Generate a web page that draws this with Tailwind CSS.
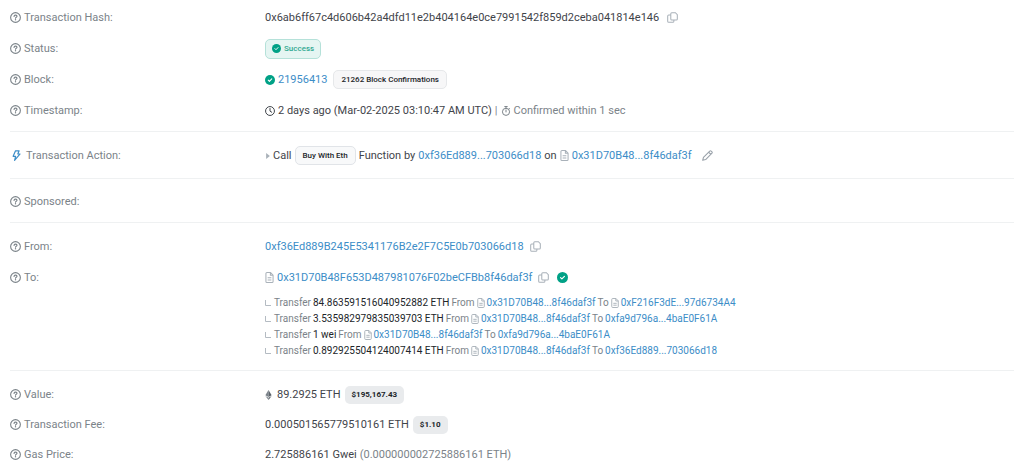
<!DOCTYPE html>
<html lang="en">
<head>
    <meta charset="UTF-8">
    <meta name="viewport" content="width=device-width, initial-scale=1.0">
    <title>Transaction Details</title>
    <script src="https://cdn.jsdelivr.net/npm/@tailwindcss/browser@4"></script>
</head>
<body class="bg-white font-['Roboto',sans-serif] text-[11px] leading-4 text-[#3f444a]">
    <!-- Icon set -->
    <svg class="hidden" aria-hidden="true">
        <symbol id="help" viewBox="0 0 16 16">
            <circle cx="8" cy="8" r="7.1" fill="none" stroke="currentColor" stroke-width="1.6"/>
            <path d="M5.9 6.400c0-1 .8-1.800 1.900-1.800h.5c1 0 1.900.7 1.900 1.700 0 1.400-2.200 1.500-2.200 2.800" fill="none" stroke="currentColor" stroke-width="1.600" stroke-linecap="round"/>
            <circle cx="8" cy="11.300" r="1" fill="currentColor"/>
        </symbol>
        <symbol id="check" viewBox="0 0 16 16">
            <circle cx="8" cy="8" r="8" fill="currentColor"/>
            <path d="M5.200 8.200l1.900 1.900 3.700-3.800" fill="none" stroke="#fff" stroke-width="1.700" stroke-linecap="round" stroke-linejoin="round"/>
        </symbol>
        <symbol id="copy" viewBox="0 0 16 16">
            <path d="M7 1h5.200L15 3.800V10a1.500 1.500 0 0 1-1.500 1.500H7A1.500 1.500 0 0 1 5.500 10V2.500A1.500 1.500 0 0 1 7 1z" fill="none" stroke="currentColor" stroke-width="1.500"/>
            <path d="M5.500 4.500h-3A1.500 1.500 0 0 0 1 6v7.500A1.500 1.500 0 0 0 2.500 15h6a1.500 1.500 0 0 0 1.500-1.500v-2" fill="none" stroke="currentColor" stroke-width="1.500"/>
        </symbol>
        <symbol id="clock" viewBox="0 0 16 16">
            <circle cx="8" cy="8" r="7.100" fill="none" stroke="currentColor" stroke-width="1.600"/>
            <path d="M8 4v4.200l2.800 1.800" fill="none" stroke="currentColor" stroke-width="1.600" stroke-linecap="round"/>
        </symbol>
        <symbol id="stopwatch" viewBox="0 0 16 16">
            <circle cx="8" cy="9.300" r="5.700" fill="none" stroke="currentColor" stroke-width="1.600"/>
            <path d="M6 .9h4M8 1v2.500M8 6.300v3.200M12.200 5.200l1.300-1.300" fill="none" stroke="currentColor" stroke-width="1.600" stroke-linecap="round"/>
        </symbol>
        <symbol id="doc" viewBox="0 0 12 16">
            <path d="M2.300.8h5.200l3.700 3.700v9.200a1.500 1.500 0 0 1-1.500 1.500H2.300A1.500 1.500 0 0 1 .8 13.700V2.300A1.500 1.500 0 0 1 2.300.8zM7.300.8v4h3.900M3.300 8.500h5.400M3.300 11.500h5.400" fill="none" stroke="currentColor" stroke-width="1.500"/>
        </symbol>
        <symbol id="bolt" viewBox="0 0 12 16">
            <path d="M4.600 1.200h5.200L7.900 5.800h3.300L3.200 15l1.500-5.800H1.100z" fill="none" stroke="currentColor" stroke-width="1.700" stroke-linejoin="round"/>
        </symbol>
        <symbol id="pencil" viewBox="0 0 16 16">
            <path d="M1 15l1.100-4.300L11.300 1.500a1.400 1.400 0 0 1 2 0l1.200 1.200a1.400 1.400 0 0 1 0 2L5.300 13.900zM9.600 3.200l3.200 3.200" fill="none" stroke="currentColor" stroke-width="1.600" stroke-linejoin="round"/>
        </symbol>
        <symbol id="caret" viewBox="0 0 5 8">
            <path d="M0 0l5 4-5 4z" fill="currentColor"/>
        </symbol>
        <symbol id="branch" viewBox="0 0 6 6">
            <path d="M.5 0v5.500H6" fill="none" stroke="currentColor"/>
        </symbol>
        <symbol id="eth" viewBox="0 0 10 16">
            <path d="M5 0L0 8.200l5 2.900z" fill="#7c848b"/>
            <path d="M5 0l5 8.200-5 2.900z" fill="#5b636a"/>
            <path d="M0 9.400L5 16v-3.700z" fill="#7c848b"/>
            <path d="M10 9.400L5 16v-3.700z" fill="#5b636a"/>
        </symbol>
    </svg>

    <main class="px-[10px]">
        <!-- Overview -->
        <dl class="flex flex-col gap-2 border-b border-[#eff1f2] pt-[6px] pb-[9px]">
            <div class="grid grid-cols-[255px_1fr] items-center">
                <dt class="flex items-center gap-[3px] text-[#7b8389]"><svg class="size-[11px]"><use href="#help"/></svg>Transaction Hash:</dt>
                <dd class="flex h-[23px] items-center gap-2">0x6ab6ff67c4d606b42a4dfd11e2b404164e0ce7991542f859d2ceba041814e146
                    <button aria-label="Copy hash" class="text-[#a9b1b9]"><svg class="size-[11px]"><use href="#copy"/></svg></button>
                </dd>
            </div>
            <div class="grid grid-cols-[255px_1fr] items-center">
                <dt class="flex items-center gap-[3px] text-[#7b8389]"><svg class="size-[11px]"><use href="#help"/></svg>Status:</dt>
                <dd class="flex h-[23px] items-center">
                    <span class="flex h-5 items-center gap-[3px] rounded-[5px] border border-[#b5e1d9] bg-[#e5f5f2] px-[6px] text-[8px] font-medium text-[#2fa891]"><svg class="size-[9px] text-[#00a186]"><use href="#check"/></svg>Success</span>
                </dd>
            </div>
            <div class="grid grid-cols-[255px_1fr] items-center">
                <dt class="flex items-center gap-[3px] text-[#7b8389]"><svg class="size-[11px]"><use href="#help"/></svg>Block:</dt>
                <dd class="flex h-[23px] items-center gap-[3px]">
                    <svg class="size-[10px] text-[#00a186]"><use href="#check"/></svg>
                    <a href="#" class="text-[#3c8dc7]">21956413</a>
                    <span class="ml-[3px] flex h-[19px] items-center rounded-[5px] border border-[#e6e8ea] bg-[#f7f7f8] px-[7px] text-[8px] font-medium text-[#212529]">21262 Block Confirmations</span>
                </dd>
            </div>
            <div class="grid grid-cols-[255px_1fr] items-center">
                <dt class="flex items-center gap-[3px] text-[#7b8389]"><svg class="size-[11px]"><use href="#help"/></svg>Timestamp:</dt>
                <dd class="flex h-[23px] items-center gap-[3px]">
                    <svg class="size-[10px]"><use href="#clock"/></svg>
                    <span>2 days ago (Mar-02-2025 03:10:47 AM UTC)</span>
                    <span class="text-[#7b8389]">|</span>
                    <svg class="size-[10px] text-[#7b8389]"><use href="#stopwatch"/></svg>
                    <span class="text-[#7b8389]">Confirmed within 1 sec</span>
                </dd>
            </div>
        </dl>

        <!-- Action -->
        <dl class="border-b border-[#eff1f2] pt-3 pb-[11px]">
            <div class="grid grid-cols-[255px_1fr] items-center">
                <dt class="flex items-center gap-[5px] pl-[2px] text-[#7b8389]"><svg class="h-[11px] w-[9px] text-[#3c8dc7]"><use href="#bolt"/></svg>Transaction Action:</dt>
                <dd class="flex h-[23px] items-center gap-[3px]">
                    <svg class="ml-px h-[6px] w-1 text-[#a9b1b9]"><use href="#caret"/></svg>
                    <span>Call</span>
                    <span class="flex h-[19px] items-center rounded-[5px] border border-[#e1e4e8] bg-[#f8f9fa] px-[7px] text-[8px] font-medium text-[#212529]">Buy With Eth</span>
                    <span>Function by</span>
                    <a href="#" class="text-[#3c8dc7]">0xf36Ed889...703066d18</a>
                    <span>on</span>
                    <svg class="h-[11px] w-[9px] text-[#a9b1b9]"><use href="#doc"/></svg>
                    <a href="#" class="text-[#3c8dc7]">0x31D70B48...8f46daf3f</a>
                    <button aria-label="Edit note" class="ml-[7px] text-[#9aa2aa]"><svg class="size-[11px]"><use href="#pencil"/></svg></button>
                </dd>
            </div>
        </dl>

        <!-- Sponsored -->
        <dl class="border-b border-[#eff1f2] pt-[11px] pb-[9px]">
            <div class="grid grid-cols-[255px_1fr] items-center">
                <dt class="flex h-[23px] items-center gap-[3px] text-[#7b8389]"><svg class="size-[11px]"><use href="#help"/></svg>Sponsored:</dt>
                <dd></dd>
            </div>
        </dl>

        <!-- Parties -->
        <dl class="flex flex-col gap-2 border-b border-[#eff1f2] pt-3 pb-[11px]">
            <div class="grid grid-cols-[255px_1fr] items-center">
                <dt class="flex items-center gap-[3px] text-[#7b8389]"><svg class="size-[11px]"><use href="#help"/></svg>From:</dt>
                <dd class="flex h-[23px] items-center gap-[6px]">
                    <a href="#" class="text-[#3c8dc7]">0xf36Ed889B245E5341176B2e2F7C5E0b703066d18</a>
                    <button aria-label="Copy sender" class="text-[#a9b1b9]"><svg class="size-[11px]"><use href="#copy"/></svg></button>
                </dd>
            </div>
            <div class="grid grid-cols-[255px_1fr] items-start">
                <dt class="flex h-[23px] items-center gap-[3px] text-[#7b8389]"><svg class="size-[11px]"><use href="#help"/></svg>To:</dt>
                <dd>
                    <div class="flex h-[23px] items-center gap-[6px]">
                        <span class="flex items-center gap-[3px]">
                            <svg class="h-[11px] w-[9px] text-[#a9b1b9]"><use href="#doc"/></svg>
                            <a href="#" class="text-[#3c8dc7]">0x31D70B48F653D487981076F02beCFBb8f46daf3f</a>
                        </span>
                        <button aria-label="Copy recipient" class="text-[#a9b1b9]"><svg class="size-[11px]"><use href="#copy"/></svg></button>
                        <svg class="ml-[2px] size-[11px] text-[#00a186]"><use href="#check"/></svg>
                    </div>
                    <ul class="mt-[6px] text-[10px] text-[#7b8389]">
                        <li class="flex items-center gap-[2px]">
                            <svg class="mr-px size-[6px] text-[#b4bbc2]"><use href="#branch"/></svg>
                            <span>Transfer</span> <span class="text-[#212529]">84.863591516040952882 ETH</span> <span>From</span>
                            <svg class="h-[10px] w-2 text-[#a9b1b9]"><use href="#doc"/></svg>
                            <a href="#" class="text-[#3c8dc7]">0x31D70B48...8f46daf3f</a> <span>To</span>
                            <svg class="h-[10px] w-2 text-[#a9b1b9]"><use href="#doc"/></svg>
                            <a href="#" class="text-[#3c8dc7]">0xF216F3dE...97d6734A4</a>
                        </li>
                        <li class="flex items-center gap-[2px]">
                            <svg class="mr-px size-[6px] text-[#b4bbc2]"><use href="#branch"/></svg>
                            <span>Transfer</span> <span class="text-[#212529]">3.535982979835039703 ETH</span> <span>From</span>
                            <svg class="h-[10px] w-2 text-[#a9b1b9]"><use href="#doc"/></svg>
                            <a href="#" class="text-[#3c8dc7]">0x31D70B48...8f46daf3f</a> <span>To</span>
                            <a href="#" class="text-[#3c8dc7]">0xfa9d796a...4baE0F61A</a>
                        </li>
                        <li class="flex items-center gap-[2px]">
                            <svg class="mr-px size-[6px] text-[#b4bbc2]"><use href="#branch"/></svg>
                            <span>Transfer</span> <span class="text-[#212529]">1 wei</span> <span>From</span>
                            <svg class="h-[10px] w-2 text-[#a9b1b9]"><use href="#doc"/></svg>
                            <a href="#" class="text-[#3c8dc7]">0x31D70B48...8f46daf3f</a> <span>To</span>
                            <a href="#" class="text-[#3c8dc7]">0xfa9d796a...4baE0F61A</a>
                        </li>
                        <li class="flex items-center gap-[2px]">
                            <svg class="mr-px size-[6px] text-[#b4bbc2]"><use href="#branch"/></svg>
                            <span>Transfer</span> <span class="text-[#212529]">0.892925504124007414 ETH</span> <span>From</span>
                            <svg class="h-[10px] w-2 text-[#a9b1b9]"><use href="#doc"/></svg>
                            <a href="#" class="text-[#3c8dc7]">0x31D70B48...8f46daf3f</a> <span>To</span>
                            <a href="#" class="text-[#3c8dc7]">0xf36Ed889...703066d18</a>
                        </li>
                    </ul>
                </dd>
            </div>
        </dl>

        <!-- Value and fees -->
        <dl class="flex flex-col gap-[7px] pt-3">
            <div class="grid grid-cols-[255px_1fr] items-center">
                <dt class="flex items-center gap-[3px] text-[#7b8389]"><svg class="size-[11px]"><use href="#help"/></svg>Value:</dt>
                <dd class="flex h-[23px] items-center gap-1">
                    <svg class="mr-px h-[10px] w-[7px]"><use href="#eth"/></svg>
                    <span>89.2925 ETH</span>
                    <span class="flex h-[18px] items-center rounded-[5px] bg-[#e9ebed] px-[7px] text-[8px] font-bold text-[#212529]">$195,167.43</span>
                </dd>
            </div>
            <div class="grid grid-cols-[255px_1fr] items-center">
                <dt class="flex items-center gap-[3px] text-[#7b8389]"><svg class="size-[11px]"><use href="#help"/></svg>Transaction Fee:</dt>
                <dd class="flex h-[23px] items-center gap-1">
                    <span>0.000501565779510161 ETH</span>
                    <span class="flex h-[18px] items-center rounded-[5px] bg-[#e9ebed] px-[7px] text-[8px] font-bold text-[#212529]">$1.10</span>
                </dd>
            </div>
            <div class="grid grid-cols-[255px_1fr] items-center">
                <dt class="flex items-center gap-[3px] text-[#7b8389]"><svg class="size-[11px]"><use href="#help"/></svg>Gas Price:</dt>
                <dd class="flex h-[23px] items-center gap-[3px]">
                    <span>2.725886161 Gwei</span>
                    <span class="text-[#7b8389]">(0.000000002725886161 ETH)</span>
                </dd>
            </div>
        </dl>
    </main>
</body>
</html>
